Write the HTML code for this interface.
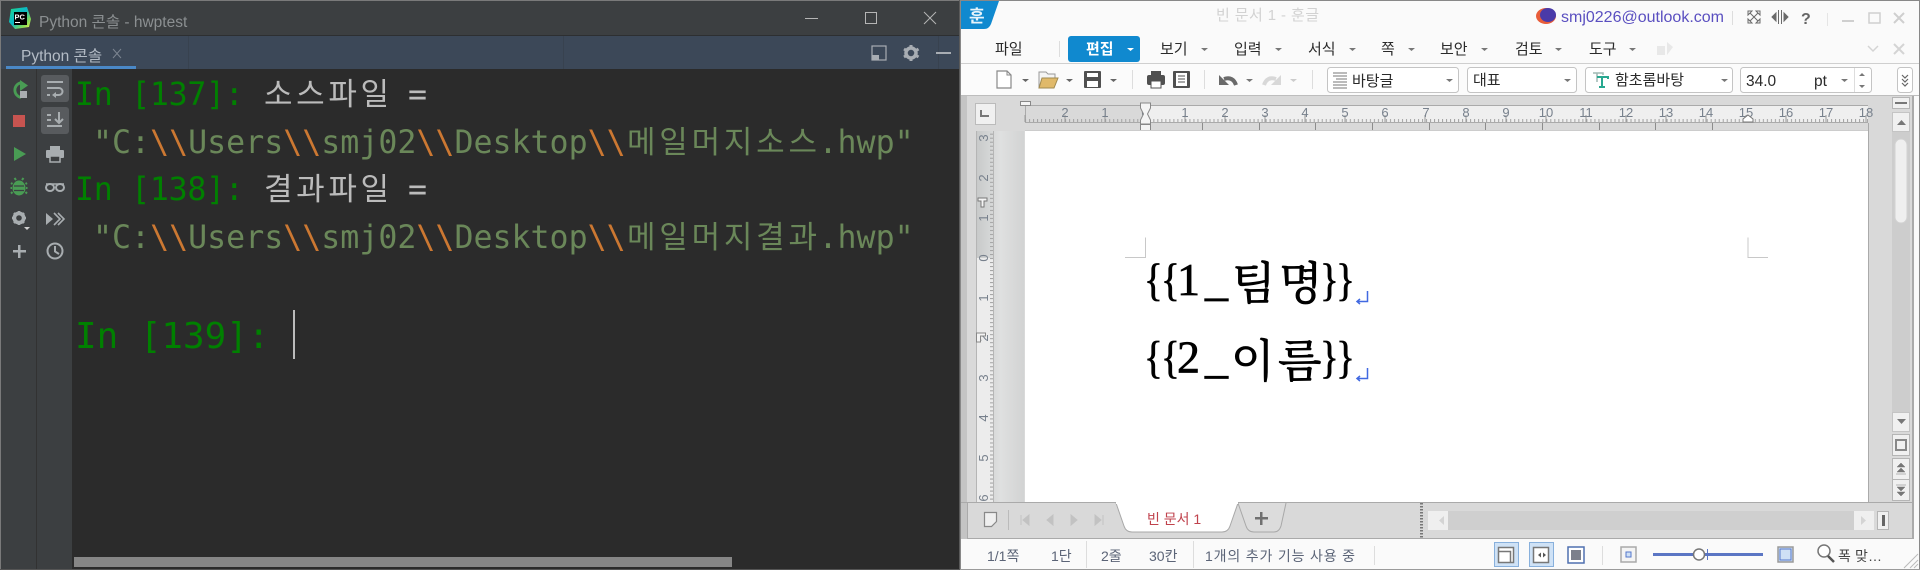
<!DOCTYPE html>
<html><head><meta charset="utf-8"><style>
html,body{margin:0;padding:0;background:#2b2b2b;width:1920px;height:570px;overflow:hidden}
svg{display:block}
text{white-space:pre}
.m{font-family:"DejaVu Sans Mono","Noto Sans CJK KR",monospace;font-size:31.6px}
.k{font-family:"Noto Sans CJK KR",sans-serif;font-size:31px}
.u{font-family:"Liberation Sans","Noto Sans CJK KR",sans-serif;font-size:15px;fill:#2a2a2a}
.s{font-family:"Liberation Sans","Noto Sans CJK KR",sans-serif;font-size:14px;fill:#5b6477}
.dl{font-family:"Liberation Serif",serif;font-size:46px;fill:#000;stroke:#000;stroke-width:.7}
.dk{font-family:"Noto Serif CJK SC",serif;font-size:45px;fill:#000;stroke:#000;stroke-width:.8}
</style></head><body>
<svg width="1920" height="570" viewBox="0 0 1920 570" xmlns="http://www.w3.org/2000/svg">
<defs>
<pattern id="ht" x="1025" y="116" width="4.01" height="6" patternUnits="userSpaceOnUse"><rect x="0" y="3" width="1" height="3" fill="#a2a2a2"/></pattern>
<pattern id="vt" x="990" y="258" width="6" height="4.01" patternUnits="userSpaceOnUse"><rect x="0" y="0" width="3" height="1" fill="#a2a2a2"/></pattern>
<linearGradient id="vg" x1="0" x2="1" y1="0" y2="0"><stop offset="0" stop-color="#c8caca"/><stop offset=".5" stop-color="#dfe0e0"/><stop offset="1" stop-color="#d2d3d3"/></linearGradient>
<linearGradient id="pc" x1="0" x2="1" y1="0" y2="1"><stop offset="0" stop-color="#21d789"/><stop offset=".45" stop-color="#09b8c9"/><stop offset=".75" stop-color="#7ed957"/><stop offset="1" stop-color="#fcf84a"/></linearGradient>
</defs>

<!-- LEFT WINDOW -->
<rect x="0" y="0" width="960" height="570" fill="#2b2b2b"/>
<rect x="0" y="0" width="960" height="35" fill="#3c3f41"/>
<rect x="0" y="35" width="960" height="1" fill="#2d2f31"/>
<rect x="0" y="36" width="960" height="33" fill="#3c4858"/>
<rect x="188" y="36" width="1" height="33" fill="#38424f"/>
<rect x="563" y="36" width="1" height="33" fill="#38424f"/>
<rect x="938" y="36" width="1" height="33" fill="#38424f"/>
<rect x="6" y="66" width="130" height="3" fill="#4a88c7"/>
<rect x="1" y="69" width="71" height="501" fill="#3c3f41"/>
<rect x="36" y="69" width="1" height="501" fill="#323232"/>
<rect x="0" y="0" width="960" height="1" fill="#7a7a7a"/>
<rect x="0" y="0" width="1" height="570" fill="#7a7a7a"/>
<rect x="959" y="0" width="1" height="570" fill="#5a5a5a"/>
<rect x="0" y="569" width="960" height="1" fill="#555"/>

<!-- PyCharm logo -->
<path d="M11 9 L27 7 L31 19 L29 27 L15 29 L9 22Z" fill="url(#pc)"/>
<rect x="14" y="12" width="13" height="13" fill="#000"/>
<text x="14.500" y="19.500" font-family="Liberation Sans" font-size="7.500" font-weight="bold" fill="#fff">PC</text>
<rect x="15" y="22" width="5" height="1" fill="#fff"/>
<text x="39" y="27" font-family="Liberation Sans,Noto Sans CJK KR,sans-serif" font-size="15.500" fill="#8b8f91">Python 콘솔 - hwptest</text>
<text x="21" y="61" font-family="Liberation Sans,Noto Sans CJK KR,sans-serif" font-size="15.500" fill="#b4bcc6">Python 콘솔</text>
<path d="M113 49 L121 58 M121 49 L113 58" stroke="#7c8591" stroke-width="1" fill="none"/>

<!-- window controls -->
<rect x="805" y="18" width="13" height="1" fill="#b5b5b5"/>
<rect x="865.500" y="12.500" width="11" height="11" fill="none" stroke="#b5b5b5"/>
<path d="M924 12 L936 24 M936 12 L924 24" stroke="#b5b5b5" stroke-width="1" fill="none"/>
<rect x="872" y="46" width="14" height="14" fill="none" stroke="#a8adb3" stroke-width="1.200"/>
<rect x="872" y="55" width="7" height="5" fill="#a8adb3"/>
<circle cx="911" cy="53" r="5" fill="none" stroke="#a8adb3" stroke-width="3.500"/>
<path d="M911 45v3M911 58v3M904 49l2.500 1.500M916 55.500l2.500 1.500M904 57l2.500-1.500M916 50.500l2.500-1.500" stroke="#a8adb3" stroke-width="3"/>
<rect x="936" y="52" width="15" height="2" fill="#a8adb3"/>

<!-- left toolbar -->
<path d="M21 97.500 A7.500 7.500 0 0 1 20 83 H22" fill="none" stroke="#499c54" stroke-width="2.800"/>
<path d="M20 80 L28 85.500 L20 91Z" fill="#499c54"/>
<rect x="20" y="91" width="7" height="7" fill="#a9adb0"/>
<rect x="13" y="115" width="12" height="12" fill="#c75450"/>
<path d="M14 147 L26 154 L14 161Z" fill="#499c54"/>
<ellipse cx="19" cy="188" rx="6.500" ry="7.500" fill="#499c54"/>
<path d="M12.500 184l-1.500-1M25.500 184l1.500-1M12 188h-1.500M26 188h1.500M12.500 192l-1.500 1.500M25.500 192l1.500 1.500M16 180l-1.500-2M22 180l1.500-2" stroke="#499c54" stroke-width="2"/>
<path d="M14 186h10M14 190.500h10" stroke="#3c3f41" stroke-width="1.300"/>
<circle cx="19" cy="218" r="4.500" fill="none" stroke="#a8adb0" stroke-width="4"/>
<path d="M19 211v14M12 218h14M14 213l10 10M24 213l-10 10" stroke="#a8adb0" stroke-width="2.500"/>
<circle cx="19" cy="218" r="2.800" fill="#3c3f41"/>
<path d="M24 227h6l-3 3z" fill="#d0d0d0"/>
<rect x="13" y="250" width="13" height="2.500" fill="#a8adb0"/>
<rect x="18" y="245" width="2.500" height="13" fill="#a8adb0"/>

<rect x="41" y="75" width="28" height="27" rx="3" fill="#585b5e"/>
<rect x="41" y="107" width="28" height="27" rx="3" fill="#585b5e"/>
<path d="M47 82h16M47 88h12a3.500 3.500 0 0 1 0 7h-5M47 95h3" stroke="#a8adb0" stroke-width="2" fill="none"/>
<path d="M56 92l-4 3 4 3z" fill="#a8adb0"/>
<path d="M47 115h4M47 120h4M47 126h15M59 112v10M55 119l4 4 4-4" stroke="#a8adb0" stroke-width="2" fill="none"/>
<rect x="50" y="146" width="10" height="4" fill="#a8adb0"/>
<rect x="46" y="150" width="18" height="8" rx="1" fill="#a8adb0"/>
<rect x="50" y="156" width="10" height="6" fill="#3c3f41" stroke="#a8adb0" stroke-width="1.500"/>
<ellipse cx="50" cy="187.500" rx="4" ry="3.500" fill="none" stroke="#a8adb0" stroke-width="2"/>
<ellipse cx="60" cy="187.500" rx="4" ry="3.500" fill="none" stroke="#a8adb0" stroke-width="2"/>
<path d="M46 184h18" stroke="#a8adb0" stroke-width="1.500"/>
<path d="M46 213v12l7-6z" fill="#a8adb0"/>
<path d="M54 213l6 6-6 6M58 213l6 6-6 6" fill="none" stroke="#a8adb0" stroke-width="1.600"/>
<circle cx="55" cy="251" r="7.500" fill="none" stroke="#a8adb0" stroke-width="2"/>
<path d="M55 246v5.500l4 2.500" fill="none" stroke="#a8adb0" stroke-width="2"/>

<!-- console text -->
<text class="m" x="75" y="105" fill="#008000" style="letter-spacing:-.3px">In [137]:</text>
<text class="k" x="264" y="105" fill="#bbbbbb" textLength="125">소스파일</text>
<text class="m" x="408" y="105" fill="#bbbbbb">=</text>
<text class="m" x="93" y="153" fill="#6a8759">"C:<tspan fill="#cc7832">\\</tspan>Users<tspan fill="#cc7832">\\</tspan>smj02<tspan fill="#cc7832">\\</tspan>Desktop<tspan fill="#cc7832">\\</tspan></text>
<text class="k" x="627" y="153" fill="#6a8759" textLength="190">메일머지소스</text>
<text class="m" x="818.500" y="153" fill="#6a8759">.hwp"</text>
<text class="m" x="75" y="200" fill="#008000" style="letter-spacing:-.3px">In [138]:</text>
<text class="k" x="264" y="200" fill="#bbbbbb" textLength="125">결과파일</text>
<text class="m" x="408" y="200" fill="#bbbbbb">=</text>
<text class="m" x="93" y="248" fill="#6a8759">"C:<tspan fill="#cc7832">\\</tspan>Users<tspan fill="#cc7832">\\</tspan>smj02<tspan fill="#cc7832">\\</tspan>Desktop<tspan fill="#cc7832">\\</tspan></text>
<text class="k" x="627" y="248" fill="#6a8759" textLength="190">메일머지결과</text>
<text class="m" x="818.500" y="248" fill="#6a8759">.hwp"</text>
<text class="m" x="75" y="348" fill="#008000" style="font-size:35.9px">In [139]:</text>
<rect x="293" y="310" width="2" height="49" fill="#bbbbbb"/>
<rect x="74" y="557" width="658" height="10" fill="#868686"/>

<!-- RIGHT WINDOW -->
<rect x="960" y="0" width="960" height="570" fill="#fafafa"/>
<rect x="960" y="0" width="960" height="1" fill="#888"/>
<rect x="960" y="0" width="1" height="570" fill="#888"/>
<rect x="1919" y="0" width="1" height="570" fill="#888"/>
<path d="M961 1 H999 L991 24 Q989 29 984 29 H961Z" fill="#1089cf"/>
<text x="969" y="22" font-family="Noto Sans CJK KR,sans-serif" font-size="17" font-weight="bold" fill="#e8f4fb">훈</text>
<text x="1216" y="20" font-family="Liberation Sans,Noto Sans CJK KR,sans-serif" font-size="15" fill="#d2d2d2" textLength="103">빈 문서 1 - 훈글</text>
<ellipse cx="1546" cy="16" rx="10" ry="8" fill="#e85d3a"/>
<ellipse cx="1548" cy="15" rx="8" ry="7" fill="#4a3aa8"/>
<text x="1561" y="22" font-family="Liberation Sans,sans-serif" font-size="16" fill="#5a4fc0" textLength="163" lengthAdjust="spacingAndGlyphs">smj0226@outlook.com</text>
<rect x="1732" y="11" width="1" height="14" fill="#ddd"/>
<path d="M1748 11h4l-4 4zM1760 11h-4l4 4zM1748 23h4l-4-4zM1760 23h-4l4-4zM1750 13l4 4 4-4M1750 21l4-4 4 4" fill="none" stroke="#6a6a6a"/>
<path d="M1772 17l4-4v8zM1788 17l-4-4v8zM1778.500 10v14M1781.500 10v14" fill="#6a6a6a" stroke="#6a6a6a"/>
<text x="1801" y="24" font-family="Liberation Sans,sans-serif" font-size="16" font-weight="bold" fill="#666">?</text>
<rect x="1827" y="13" width="1" height="13" fill="#e5e5e5"/>
<rect x="1842" y="20" width="12" height="2" fill="#cfcfcf"/>
<rect x="1869" y="13" width="11" height="10" fill="none" stroke="#cfcfcf" stroke-width="1.500"/>
<path d="M1894 13l10 10M1904 13l-10 10" stroke="#cfcfcf" stroke-width="2"/>

<!-- menu row -->
<text class="u" x="995" y="54">파일</text>
<rect x="1059" y="41" width="1" height="16" fill="#ddd"/>
<rect x="1068" y="36" width="72" height="26" rx="3" fill="#1089cf"/>
<text class="u" x="1086" y="54" style="fill:#fff;font-weight:bold">편집</text>
<path d="M1127 48h7l-3.500 3z" fill="#fff"/>
<text class="u" x="1160" y="54">보기</text><path d="M1201 48h7l-3.500 3z" fill="#777"/>
<text class="u" x="1234" y="54">입력</text><path d="M1275 48h7l-3.500 3z" fill="#777"/>
<text class="u" x="1308" y="54">서식</text><path d="M1349 48h7l-3.500 3z" fill="#777"/>
<text class="u" x="1381" y="54">쪽</text><path d="M1408 48h7l-3.500 3z" fill="#777"/>
<text class="u" x="1440" y="54">보안</text><path d="M1481 48h7l-3.500 3z" fill="#777"/>
<text class="u" x="1515" y="54">검토</text><path d="M1555 48h7l-3.500 3z" fill="#777"/>
<text class="u" x="1589" y="54">도구</text><path d="M1629 48h7l-3.500 3z" fill="#777"/>
<path d="M1657 46h8v9h-8zM1667 42l6 5-6 8z" fill="#e8e8e8"/>
<path d="M1868 46l5 5 5-5" stroke="#d4d4d4" stroke-width="1.500" fill="none"/>
<path d="M1894 44l10 10M1904 44l-10 10" stroke="#d4d4d4" stroke-width="2"/>
<rect x="961" y="63" width="958" height="1" fill="#cfcfcf"/>

<!-- toolbar row -->
<rect x="961" y="64" width="958" height="31" fill="#fbfbfb"/>
<path d="M997 71h10l4 4v13h-14z" fill="#fff" stroke="#888" stroke-width="1.200"/>
<path d="M1007 71v4h4" fill="none" stroke="#888"/>
<path d="M1022 79h7l-3.500 3z" fill="#666"/>
<path d="M1039 88v-16h7l2 2h7v4" fill="#f4f4f4" stroke="#999"/>
<path d="M1039 88l3-10h16l-4 10z" fill="#e0b96a" stroke="#a08a50"/>
<path d="M1066 79h7l-3.500 3z" fill="#666"/>
<rect x="1084" y="71" width="17" height="17" rx="1" fill="#505050"/>
<rect x="1087" y="73" width="11" height="4" fill="#fff"/>
<rect x="1087" y="81" width="11" height="6" fill="#fff"/>
<path d="M1110 79h7l-3.500 3z" fill="#666"/>
<rect x="1132" y="70" width="1" height="19" fill="#ddd"/>
<rect x="1151" y="71" width="10" height="5" fill="#505050"/>
<rect x="1147" y="75" width="18" height="10" rx="2" fill="#505050"/>
<rect x="1151" y="81" width="10" height="7" fill="#fff" stroke="#505050"/>
<rect x="1173" y="71" width="17" height="17" rx="1" fill="#505050"/>
<rect x="1176" y="73" width="11" height="13" fill="#fff"/>
<path d="M1178 76h7M1178 79h7M1178 82h7" stroke="#505050"/>
<rect x="1204" y="70" width="1" height="19" fill="#ddd"/>
<path d="M1236 85 Q1233 76 1224 79" fill="none" stroke="#6a6a6a" stroke-width="4"/>
<path d="M1219 75 L1219 85 L1229 85Z" fill="#6a6a6a"/>
<path d="M1246 79h7l-3.500 3z" fill="#777"/>
<path d="M1264 85 Q1267 76 1276 79" fill="none" stroke="#d8d8d8" stroke-width="4"/>
<path d="M1281 75 L1281 85 L1271 85Z" fill="#d8d8d8"/>
<path d="M1290 79h7l-3.500 3z" fill="#ccc"/>
<rect x="1312" y="70" width="1" height="19" fill="#ddd"/>

<rect x="1327.500" y="67.500" width="131" height="25" rx="3" fill="#fff" stroke="#c4c4c4"/>
<path d="M1333 73h14M1333 76h14M1336 79h11M1333 82h14M1333 85h14M1333 88h14" stroke="#777"/>
<text class="u" x="1352" y="86">바탕글</text>
<path d="M1446 79h7l-3.500 3z" fill="#777"/>
<rect x="1467.500" y="67.500" width="109" height="25" rx="3" fill="#fff" stroke="#c4c4c4"/>
<text class="u" x="1473" y="85">대표</text>
<path d="M1564 79h7l-3.500 3z" fill="#777"/>
<rect x="1585.500" y="67.500" width="147" height="25" rx="3" fill="#fff" stroke="#c4c4c4"/>
<path d="M1593 73h10v2M1597 73v9" stroke="#9fb9b3" stroke-width="1.500" fill="none"/>
<path d="M1597 77h11v2M1602 77v10M1599 87h6" stroke="#28a890" stroke-width="2" fill="none"/>
<text class="u" x="1615" y="85">함초롬바탕</text>
<path d="M1721 79h7l-3.500 3z" fill="#777"/>
<rect x="1740.500" y="67.500" width="131" height="25" rx="3" fill="#fff" stroke="#c4c4c4"/>
<text class="u" x="1746" y="86" style="font-size:15.500px">34.0</text>
<text class="u" x="1814" y="86" style="font-size:15.500px">pt</text>
<path d="M1841 79h7l-3.500 3z" fill="#777"/>
<rect x="1854" y="68" width="1" height="24" fill="#ddd"/>
<path d="M1859 76h6l-3-3zM1859 85h6l-3 3z" fill="#777"/>
<rect x="1897.500" y="67.500" width="15" height="25" rx="3" fill="#fff" stroke="#c4c4c4"/>
<path d="M1902 75l3 3 3-3M1902 79l3 3 3-3M1902 83l3 3 3-3" stroke="#666" stroke-width="1.200" fill="none"/>

<!-- workspace -->
<rect x="961" y="95" width="958" height="1" fill="#bdbdbd"/>
<rect x="961" y="96" width="951" height="443" fill="#d9d9d9"/>
<rect x="961" y="96" width="6" height="443" fill="#c4c4c4"/>
<rect x="1912" y="96" width="2" height="443" fill="#aaa"/>
<rect x="975.500" y="103.500" width="20" height="21" fill="#f0f0f0" stroke="#bbb"/>
<path d="M981 110v6h8" stroke="#777" stroke-width="2" fill="none"/>

<!-- h ruler -->
<rect x="1025" y="106" width="120" height="16" fill="#d9d9d9"/>
<rect x="1145" y="106" width="723" height="16" fill="#efefef"/>
<rect x="1025" y="105" width="843" height="1" fill="#aaa"/>
<rect x="1025" y="122" width="843" height="1" fill="#aaa"/>
<rect x="1025" y="105" width="1" height="18" fill="#aaa"/>
<rect x="1025" y="116" width="843" height="6" fill="url(#ht)"/>
<path d="M1025 115v7M1065 115v7M1105 115v7M1185 115v7M1225 115v7M1265 115v7M1305 115v7M1345 115v7M1385 115v7M1425 115v7M1466 115v7M1506 115v7M1546 115v7M1586 115v7M1626 115v7M1666 115v7M1706 115v7M1746 115v7M1786 115v7M1826 115v7M1866 115v7" stroke="#9a9a9a"/>
<g text-anchor="middle" font-family="Liberation Sans" font-size="13" fill="#77808c">
<text x="1065" y="117">2</text><text x="1105" y="117">1</text><text x="1145" y="117">0</text><text x="1185" y="117">1</text><text x="1225" y="117">2</text><text x="1265" y="117">3</text><text x="1305" y="117">4</text><text x="1345" y="117">5</text><text x="1385" y="117">6</text><text x="1426" y="117">7</text><text x="1466" y="117">8</text><text x="1506" y="117">9</text><text x="1546" y="117">10</text><text x="1586" y="117">11</text><text x="1626" y="117">12</text><text x="1666" y="117">13</text><text x="1706" y="117">14</text><text x="1746" y="117">15</text><text x="1786" y="117">16</text><text x="1826" y="117">17</text><text x="1866" y="117">18</text>
</g>
<path d="M1202.500 123v7M1259.500 123v7M1315.500 123v7M1372.500 123v7M1429.500 123v7M1485.500 123v7M1542.500 123v7M1599.500 123v7M1655.500 123v7M1712.500 123v7" stroke="#8c8c8c"/>
<rect x="1020.500" y="101.500" width="10" height="4" fill="#f4f4f4" stroke="#888"/>
<path d="M1140.500 103h10v5l-3 6 3 6v4h-10v-4l3-6-3-6z" fill="#f4f4f4" stroke="#888"/>
<rect x="1140.500" y="124.500" width="10" height="6" fill="#f4f4f4" stroke="#888"/>
<path d="M1743 122v-3l5-4 5 4v3z" fill="#fff" stroke="#777"/>

<!-- v ruler -->
<rect x="977" y="131" width="47" height="371" fill="url(#vg)"/>
<rect x="977" y="258" width="16" height="244" fill="#ececec"/>
<rect x="976" y="131" width="1" height="371" fill="#b5b5b5"/>
<rect x="993" y="131" width="1" height="371" fill="#b5b5b5"/>
<rect x="987" y="131" width="6" height="371" fill="url(#vt)"/>
<g font-family="Liberation Sans" font-size="13" fill="#77808c" text-anchor="middle">
<text transform="translate(988,138) rotate(-90)">3</text><text transform="translate(988,178) rotate(-90)">2</text><text transform="translate(988,218) rotate(-90)">1</text><text transform="translate(988,258) rotate(-90)">0</text><text transform="translate(988,298) rotate(-90)">1</text><text transform="translate(988,338) rotate(-90)">2</text><text transform="translate(988,378) rotate(-90)">3</text><text transform="translate(988,418) rotate(-90)">4</text><text transform="translate(988,458) rotate(-90)">5</text><text transform="translate(988,498) rotate(-90)">6</text>
</g>
<path d="M978 198h9v3h-3v6h-3v-6h-3z" fill="#f4f4f4" stroke="#777"/>
<path d="M976.500 333h9v3h-5v6h-4z" fill="#f4f4f4" stroke="#888"/>

<!-- page -->
<rect x="1025" y="131" width="843" height="371" fill="#fff"/>
<rect x="1868" y="123" width="1" height="379" fill="#aaa"/>
<rect x="1025" y="130" width="843" height="1" fill="#ccc"/>
<path d="M1125 257.500h20.500v-20M1768 257.500h-20v-20" fill="none" stroke="#c8c8c8"/>
<text class="dl" transform="translate(1144,295) scale(.85,1)" x="0 20">{{</text>
<text class="dl" x="1177 1205" y="295">1_</text>
<text class="dk" x="1232 1279" y="299">팀명</text>
<text class="dl" transform="translate(1320,295) scale(.85,1)" x="0 19">}}</text>
<text class="dl" transform="translate(1144,372.500) scale(.85,1)" x="0 20">{{</text>
<text class="dl" x="1177 1205" y="372.500">2_</text>
<text class="dk" x="1231 1278" y="376.500">이름</text>
<text class="dl" transform="translate(1320,372.500) scale(.85,1)" x="0 19">}}</text>
<path d="M1367.500 291v10.500h-10M1360 299l-3 2.500 3 2.500" fill="none" stroke="#4169e1" stroke-width="1.500"/>
<path d="M1367.500 368v10.500h-10M1360 376l-3 2.500 3 2.500" fill="none" stroke="#4169e1" stroke-width="1.500"/>

<!-- v scrollbar -->
<rect x="1892" y="132" width="18" height="280" fill="#cdcdcd"/>
<rect x="1892.500" y="97.500" width="17" height="11" fill="#f0f0f0" stroke="#b5b5b5"/>
<rect x="1895" y="102" width="12" height="2" fill="#777"/>
<rect x="1892.500" y="112.500" width="17" height="19" fill="#f0f0f0" stroke="#c4c4c4"/>
<path d="M1897 125h9l-4.500-5z" fill="#777"/>
<rect x="1895" y="139" width="12" height="84" rx="6" fill="#efefef" stroke="#d2d2d2"/>
<rect x="1892.500" y="412.500" width="17" height="19" fill="#f0f0f0" stroke="#c4c4c4"/>
<path d="M1897 419h9l-4.500 5z" fill="#777"/>
<rect x="1892.500" y="434.500" width="17" height="21" fill="#f0f0f0" stroke="#b5b5b5"/>
<rect x="1896" y="440" width="10" height="10" fill="none" stroke="#888" stroke-width="2"/>
<rect x="1892.500" y="458.500" width="17" height="21" fill="#f0f0f0" stroke="#b5b5b5"/>
<rect x="1892.500" y="479.500" width="17" height="21" fill="#f0f0f0" stroke="#b5b5b5"/>
<path d="M1897 467h8l-4-4zM1897 472h8l-4-4zM1896 474h10" fill="#777" stroke="#777" stroke-width=".5"/>
<path d="M1896 485h10M1897 487h8l-4 4zM1897 492h8l-4 4z" fill="#777" stroke="#777" stroke-width=".5"/>

<!-- tab bar -->
<rect x="961" y="502" width="952" height="1" fill="#aaa"/>
<rect x="967" y="538" width="946" height="1" fill="#aaa"/>
<rect x="967" y="503" width="1" height="36" fill="#aaa"/>
<path d="M984.500 512.500h12v9l-5 5h-7z" fill="#efefef" stroke="#888" stroke-width="1.200"/>
<rect x="1008" y="510" width="1" height="20" fill="#bbb"/>
<path d="M1021 515v10M1029 515l-6 5 6 5zM1053 515l-6 5 6 5zM1071 515l6 5-6 5zM1095 515l6 5-6 5zM1103 515v10" fill="#c2c2c2" stroke="#c2c2c2"/>
<path d="M1238 503 L1246 526 Q1248 532 1254 532 H1274 Q1279 532 1281 526 L1286 503" fill="#dcdcdc" stroke="#a8a8a8"/>
<path d="M1116 503 L1124 526 Q1126 532 1132 532 H1222 Q1228 532 1230 526 L1238 503Z" fill="#fff" stroke="#a8a8a8"/>
<rect x="1116" y="502" width="122" height="2" fill="#fff"/>
<text x="1147" y="524" font-family="Liberation Sans,Noto Sans CJK KR,sans-serif" font-size="14" fill="#c0424c">빈 문서 1</text>
<rect x="1255" y="517" width="13" height="2.500" fill="#707070"/>
<rect x="1260" y="512" width="2.500" height="13" fill="#707070"/>
<path d="M1421.500 503v35" stroke="#777" stroke-width="3" stroke-dasharray="1.500 1.500"/>
<rect x="1428" y="511" width="446" height="19" fill="#cfcfcf"/>
<rect x="1428" y="511" width="20" height="19" fill="#efefef"/>
<path d="M1444 516v9l-5-4.500z" fill="#d4d4d4"/>
<rect x="1854" y="511" width="20" height="19" fill="#efefef"/>
<path d="M1861 516v9l5-4.500z" fill="#d4d4d4"/>
<rect x="1877.500" y="511.500" width="11" height="18" fill="#f0f0f0" stroke="#b5b5b5"/>
<rect x="1882" y="515" width="3" height="11" fill="#666"/>

<!-- status bar -->
<rect x="961" y="539" width="958" height="31" fill="#fafafa"/>
<rect x="960" y="569" width="960" height="1" fill="#9a9a9a"/>
<text class="s" x="987" y="561">1/1쪽</text>
<text class="s" x="1051" y="561">1단</text>
<rect x="1086" y="541" width="1" height="27" fill="#ddd"/>
<text class="s" x="1101" y="561">2줄</text>
<text class="s" x="1149" y="561">30칸</text>
<rect x="1193" y="541" width="1" height="27" fill="#ddd"/>
<text class="s" x="1205" y="561" textLength="150">1개의 추가 기능 사용 중</text>
<rect x="1374" y="546" width="1" height="19" fill="#ddd"/>
<rect x="1494.500" y="542.500" width="24" height="24" fill="#cfe2f6" stroke="#88b0dc"/>
<rect x="1498.500" y="547.500" width="15" height="15" fill="#fff" stroke="#777" stroke-width="1.500"/>
<path d="M1498.500 551.500h12v11" fill="none" stroke="#777" stroke-width="1.500"/>
<rect x="1529.500" y="542.500" width="24" height="24" fill="#cfe2f6" stroke="#88b0dc"/>
<rect x="1533.500" y="547.500" width="15" height="15" fill="#fff" stroke="#777" stroke-width="1.500"/>
<path d="M1538 555l3-2.500v5zM1546 555l-3-2.500v5z" fill="#555"/>
<rect x="1568" y="547" width="16" height="16" fill="#fff" stroke="#4f70b0" stroke-width="1.500"/>
<rect x="1571" y="550" width="10" height="10" fill="#7c808c"/>
<rect x="1602" y="546" width="1" height="19" fill="#ddd"/>
<rect x="1621" y="547" width="15" height="15" fill="#f4f4f4" stroke="#aaa" stroke-width="1.500"/>
<rect x="1626" y="552" width="5" height="5" fill="#cfe0f5" stroke="#5577cc"/>
<rect x="1653" y="553" width="110" height="3" fill="#5b76c4"/>
<rect x="1707" y="549" width="1" height="11" fill="#5b76c4"/>
<circle cx="1699" cy="554.500" r="5.500" fill="#fff" stroke="#777" stroke-width="1.500"/>
<rect x="1778" y="547" width="15" height="15" fill="#cfe0f5" stroke="#999" stroke-width="1.500"/>
<path d="M1780 549h11v11h-11z" fill="none" stroke="#5577cc"/>
<circle cx="1824" cy="551" r="6" fill="#fff" stroke="#777" stroke-width="1.500"/>
<path d="M1828 556l6 6" stroke="#555" stroke-width="2.500"/>
<text class="s" x="1838" y="561" style="fill:#444" textLength="44">폭 맞…</text>
<path d="M1904 568l14-14M1910 568l8-8M1914 568l4-4" stroke="#bbb"/>
</svg>
</body></html>
